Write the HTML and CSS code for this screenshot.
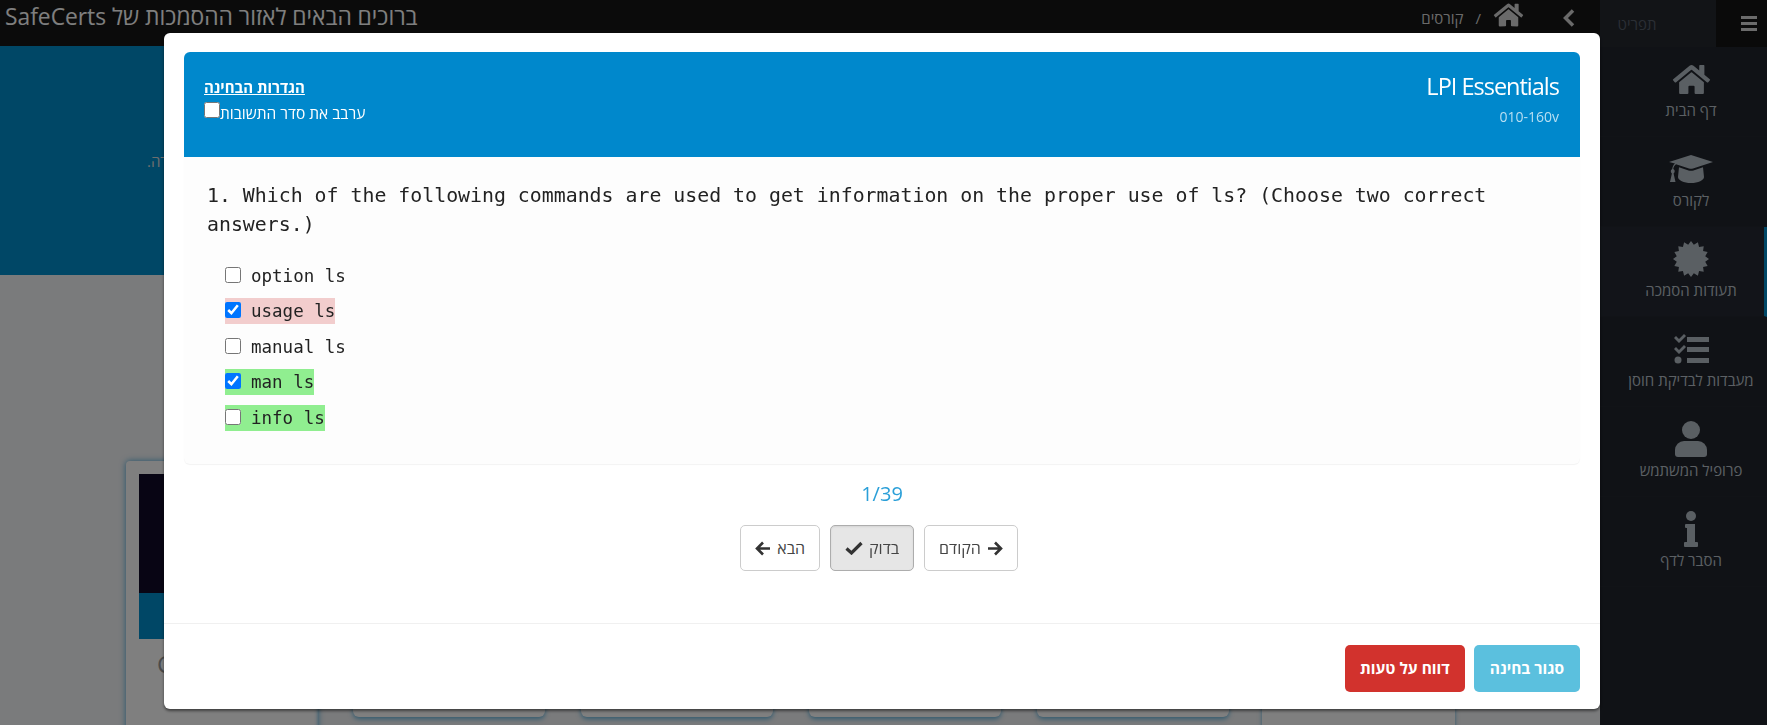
FILE: index.html
```html
<!DOCTYPE html>
<html lang="he" dir="rtl">
<head>
<meta charset="utf-8">
<title>SafeCerts</title>
<link rel="stylesheet" href="styles.css">
</head>
<body>
<div class="app">
  <aside class="side">
    <div class="side-top">
      <div class="burger"><svg width="16" height="15" viewBox="0 0 16 15"><path d="M0 0h16v3H0zM0 6h16v3H0zM0 12h16v3H0z"/></svg></div>
      <div class="side-title">תפריט</div>
    </div>
    <nav class="nav">
      <a class="nav-item"><span class="slot"><svg class="ic" width="39" height="33" viewBox="0 0 576 512"><path d="M280 148 96 300v164a16 16 0 0 0 16 16l112-.3a16 16 0 0 0 16-16V368a16 16 0 0 1 16-16h64a16 16 0 0 1 16 16v95.600a16 16 0 0 0 16 16l112 .4a16 16 0 0 0 16-16V300L296 148a12 12 0 0 0-16 0zM572 251l-84-69V44a12 12 0 0 0-12-12h-56a12 12 0 0 0-12 12v72l-89-74a48 48 0 0 0-61 0L4 251a12 12 0 0 0-2 17l26 31a12 12 0 0 0 17 2L280 107a12 12 0 0 1 16 0l235 194a12 12 0 0 0 17-2l26-31a12 12 0 0 0-2-17z"/></svg></span><span class="label">דף הבית</span></a>
      <a class="nav-item"><span class="slot"><svg class="ic" width="44" height="28" viewBox="0 0 44 28"><path d="M22 0 44 7 24 13.500c-1.300.4-2.700.4-4 0L7 9.300C5.500 10.300 4.500 12 4.300 14c.9.500 1.400 1.300 1.400 2.300 0 .9-.4 1.600-1.100 2.100L6.500 27H1l1.900-8.600c-.7-.5-1.100-1.200-1.100-2.100 0-1 .6-1.900 1.400-2.300.2-2.300 1.200-4.300 2.800-5.600L0 7z"/><path d="M10 12.300 19.500 15.400c1.700.5 3.400.5 5 0L34 12.300l1 9.700c0 3.300-5.800 6-13 6s-13-2.700-13-6z"/></svg></span><span class="label">לקורס</span></a>
      <a class="nav-item active"><span class="slot"><svg class="ic" width="36" height="36" viewBox="0 0 36 36"><polygon points="36,18 32.220,20.830 34.630,24.890 30.060,26.060 30.730,30.730 26.060,30.060 24.890,34.630 20.830,32.220 18,36 15.170,32.220 11.110,34.630 9.940,30.060 5.270,30.730 5.940,26.060 1.370,24.890 3.780,20.830 0,18 3.780,15.170 1.370,11.110 5.940,9.940 5.270,5.270 9.940,5.940 11.110,1.370 15.170,3.780 18,0 20.830,3.780 24.890,1.370 26.060,5.940 30.730,5.270 30.060,9.940 34.630,11.110 32.220,15.170"/></svg></span><span class="label">תעודות הסמכה</span></a>
      <a class="nav-item"><span class="slot"><svg class="ic" width="36" height="30" viewBox="0 0 36 30"><path d="M14 3h22v5H14zM14 13h22v5H14zM14 24h22v5H14zM1 4l2-2 3 3 5-5 2 2-7 7zM1 15l2-2 3 3 5-5 2 2-7 7z"/><circle cx="5" cy="26" r="3.500"/></svg></span><span class="label">מעבדות לבדיקת חוסן</span></a>
      <a class="nav-item"><span class="slot"><svg class="ic" width="32" height="36" viewBox="0 0 32 36"><circle cx="16" cy="9" r="9"/><path d="M9 20h14a9 9 0 0 1 9 9v4a3 3 0 0 1-3 3H3a3 3 0 0 1-3-3v-4a9 9 0 0 1 9-9z"/></svg></span><span class="label">פרופיל המשתמש</span></a>
      <a class="nav-item"><span class="slot"><svg class="ic" width="14" height="36" viewBox="0 0 14 36"><circle cx="7" cy="5" r="5"/><path d="M2 13h9v18h2a1 1 0 0 1 1 1v3a1 1 0 0 1-1 1H1a1 1 0 0 1-1-1v-3a1 1 0 0 1 1-1h2V17H2a1 1 0 0 1-1-1v-2a1 1 0 0 1 1-1z"/></svg></span><span class="label">הסבר לדף</span></a>
    </nav>
  </aside>
  <div class="main">
    <header class="topbar">
      <div class="crumbs">
        <svg class="chev" width="12" height="18" viewBox="0 0 12 18"><path d="M10 1.500 2.500 9l7.500 7.500" fill="none" stroke-width="3.500"/></svg>
        <svg class="crumb-home" width="31" height="26" viewBox="0 0 576 512"><path d="M280 148 96 300v164a16 16 0 0 0 16 16l112-.3a16 16 0 0 0 16-16V368a16 16 0 0 1 16-16h64a16 16 0 0 1 16 16v95.600a16 16 0 0 0 16 16l112 .4a16 16 0 0 0 16-16V300L296 148a12 12 0 0 0-16 0zM572 251l-84-69V44a12 12 0 0 0-12-12h-56a12 12 0 0 0-12 12v72l-89-74a48 48 0 0 0-61 0L4 251a12 12 0 0 0-2 17l26 31a12 12 0 0 0 17 2L280 107a12 12 0 0 1 16 0l235 194a12 12 0 0 0 17-2l26-31a12 12 0 0 0-2-17z"/></svg>
        <span class="slash">/</span>
        <span class="crumb">קורסים</span>
      </div>
      <h1 class="welcome">ברוכים הבאים לאזור ההסמכות של SafeCerts</h1>
    </header>
    <section class="hero"><p class="hero-text">לקורסים המקוונים שלנו ברוכים הבאים, בחרו קורס והתחילו בלמידה.</p></section>
    <section class="cards">
      <div class="card">
        <div class="card-pic"></div>
        <div class="card-band"></div>
        <div class="card-name">CompTIA</div>
      </div>
      <div class="card-wide">
        <div class="pill"></div><div class="pill"></div><div class="pill"></div><div class="pill"></div>
      </div>
      <div class="card-end"></div>
    </section>
  </div>
</div>

<div class="backdrop"></div>
<div class="modal">
  <div class="modal-body">
    <div class="exam-head">
      <div class="exam-title">
        <div class="exam-name">LPI Essentials</div>
        <div class="exam-code">010-160v</div>
      </div>
      <div class="exam-settings">
        <div class="settings-title">הגדרות הבחינה</div>
        <label class="shuffle">ערבב את סדר התשובות<input type="checkbox"></label>
      </div>
    </div>
    <div class="question" dir="ltr">
      <p class="q-text">1. Which of the following commands are used to get information on the proper use of ls? (Choose two correct answers.)</p>
      <ul class="answers">
        <li><label class="answer"><input type="checkbox"><span>option ls</span></label></li>
        <li><label class="answer wrong"><input type="checkbox" checked><span>usage ls</span></label></li>
        <li><label class="answer"><input type="checkbox"><span>manual ls</span></label></li>
        <li><label class="answer right"><input type="checkbox" checked><span>man ls</span></label></li>
        <li><label class="answer right"><input type="checkbox"><span>info ls</span></label></li>
      </ul>
    </div>
    <div class="counter">1/39</div>
    <div class="pager">
      <button class="btn"><svg width="16" height="15" viewBox="0 0 16 15"><path d="M1 7.500h13M8 1.500l6 6-6 6" fill="none" stroke-width="2.600"/></svg>הקודם</button>
      <button class="btn pressed">בדוק<svg width="18" height="14" viewBox="0 0 18 14"><path d="M1.500 7.500 6.500 12 16.500 2" fill="none" stroke-width="3.200"/></svg></button>
      <button class="btn">הבא<svg width="16" height="15" viewBox="0 0 16 15"><path d="M15 7.500H2M8 1.500l-6 6 6 6" fill="none" stroke-width="2.600"/></svg></button>
    </div>
  </div>
  <footer class="modal-foot">
    <button class="act info">סגור בחינה</button>
    <button class="act danger">דווח על טעות</button>
  </footer>
</div>
</body>
</html>
```
FILE: styles.css
```css
* { box-sizing: border-box; }
html, body { margin: 0; height: 100%; overflow: hidden; }
body { font-family: "Open Sans", "Noto Sans", sans-serif; background: #f4f6f8; color: #333; }
.app { display: flex; height: 725px; overflow: hidden; }

.side { width: 167px; flex: none; background: #20242c; }
.side-top { display: flex; height: 47px; }
.burger { width: 51px; flex: none; background: #141414; display: flex; align-items: center; padding-right: 10px; }
.burger svg { fill: #d6d6d6; }
.side-title { flex: 1; padding-right: 42px; display: flex; align-items: center; justify-content: center; font-size: 15px; background: #24282f; color: #555c68; }
.nav { display: flex; flex-direction: column; }
.nav-item { height: 90px; padding: 12px 0 0 15px; display: flex; flex-direction: column; align-items: center; border-bottom: 1px solid #23272f; color: #b8c0c8; font-size: 15px; }
.nav-item.active { border-right: 3px solid #008ecc; background: #242932; padding-left: 18px; }
.slot { height: 40px; display: flex; align-items: center; justify-content: center; }
.label { line-height: 20px; margin-top: 1px; white-space: nowrap; }
.ic { fill: #b5bec6; }

.main { flex: 1; min-width: 0; background: #f4f6f8; }
.topbar { height: 46px; background: #161616; display: flex; justify-content: space-between; align-items: flex-start; padding: 0 25px 0 5px; }
.crumbs { display: flex; align-items: center; height: 36px; font-size: 15px; color: #d5d5d5; }
.chev { stroke: #d5d5d5; margin-left: 39px; }
.crumb-home { fill: #d5d5d5; margin: 0 0 6px 12px; }
.slash { margin-left: 12px; }
.welcome { margin: 0; font-size: 22.800px; line-height: 34px; font-weight: 400; color: #fff; white-space: nowrap; }
.hero { height: 229px; background: #008ecc; display: flex; align-items: center; padding-left: 147px; direction: ltr; overflow: hidden; }
.hero-text { margin: 0; flex: none; direction: rtl; text-align: left; color: #ddd; font-size: 15px; white-space: nowrap; }
.cards { display: flex; padding: 186px 0 0 126px; direction: ltr; }
.card { width: 192px; height: 300px; flex: none; background: #fff; padding: 13px; box-shadow: 0 0 6px rgba(0, 136, 204, .7); border-radius: 4px; }
.card-pic { height: 119px; background: #100a28; }
.card-band { height: 46px; background: #008ecc; }
.card-name { font-size: 24px; color: #969696; padding: 8px 18px; }
.card-wide { width: 944px; height: 300px; flex: none; display: flex; gap: 36px; padding: 229px 0 0 35px; box-shadow: 0 0 4px rgba(0, 136, 204, .6); }
.pill { width: 192px; height: 27px; background: #fff; border-radius: 0 0 6px 6px; box-shadow: 0 2px 5px rgba(0, 136, 204, .6); }
.card-end { width: 193px; height: 300px; flex: none; background: #fff; box-shadow: 0 0 4px rgba(0, 136, 204, .6); }

.backdrop { position: fixed; inset: 0; background: rgba(0, 0, 0, .5); }
.modal { position: fixed; left: 164px; top: 33px; width: 1436px; height: 676px; background: #fff; border-radius: 6px; box-shadow: 0 2px 3px rgba(0,0,0,.5); display: flex; flex-direction: column; }
.modal-body { flex: 1; padding: 19px 20px 0; }
.exam-head { height: 105px; background: #0088cc; border-radius: 6px 6px 0 0; color: #fff; display: flex; justify-content: space-between; padding: 20px 21px 20px 20px; }
.exam-name { font-size: 23.500px; letter-spacing: -1px; line-height: 29px; }
.exam-code { font-size: 14px; line-height: 18px; color: #b9dff2; margin-top: 7px; }
.settings-title { font-size: 15px; font-weight: 700; text-decoration: underline; line-height: 20px; text-align: left; margin-top: 5px; }
.shuffle { display: flex; align-items: center; font-size: 15.500px; line-height: 20px; margin-top: 6px; }
.shuffle input { margin: -6px 0 0; width: 16px; height: 16px; }
.question { background: #fdfdfd; border-radius: 0 0 6px 6px; box-shadow: 0 1px 1px rgba(0,0,0,.05); height: 307px; padding: 24px 23px; font-family: "DejaVu Sans Mono", "Liberation Mono", monospace; color: #222; }
.q-text { margin: 0; font-size: 19.870px; line-height: 29px; }
.answers { list-style: none; margin: 19px 0 0; padding: 0 0 0 18px; font-size: 17.500px; }
.answers li { height: 35.500px; display: flex; align-items: center; }
.answer { display: inline-flex; align-items: center; height: 26px; }
.answer input { margin: 0 10px 2px 0; width: 16px; height: 16px; }
.wrong { background: #f2cdcd; }
.right { background: #90ee90; }
.counter { text-align: center; font-size: 20px; line-height: 24px; color: #2a9fd8; margin-top: 18px; }
.pager { display: flex; justify-content: center; gap: 10px; margin-top: 19px; padding-right: 6px; }
.btn { height: 46px; padding: 0 14px; background: #fff; border: 1px solid #ccc; border-radius: 5px; font: 16px "Open Sans", sans-serif; color: #444; display: flex; align-items: center; gap: 6px; }
.btn svg { stroke: #333; }
.pressed { background: #e6e6e6; border-color: #adadad; box-shadow: inset 0 1px 2px rgba(0,0,0,.08); }
.modal-foot { height: 86px; border-top: 1px solid #f0f0f0; display: flex; align-items: center; gap: 9px; padding: 3px 20px 0; }
.act { height: 47px; border: 0; border-radius: 5px; color: #fff; font: 700 15.500px "Open Sans", sans-serif; padding: 0 16px; }
.info { background: #5bc0de; }
.danger { background: #d2322d; padding: 0 15px; }
```
